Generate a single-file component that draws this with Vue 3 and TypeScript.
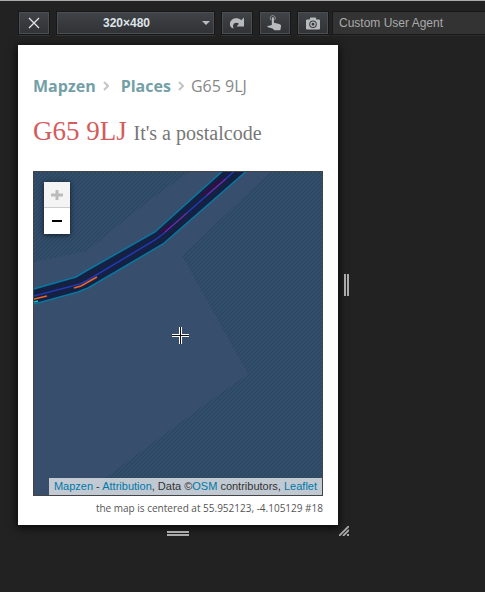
<script setup lang="ts">
import { computed, ref } from 'vue'

interface Preset {
  width: number
  height: number
}

const presets: Preset[] = [
  { width: 320, height: 480 },
  { width: 360, height: 640 },
  { width: 768, height: 1024 },
]
const selected = ref(0)
const rotated = ref(false)
const touch = ref(false)
const userAgent = ref('')

const deviceSize = computed(() => {
  const { width, height } = presets[selected.value]
  return rotated.value
    ? { width: `${height}px`, minHeight: `${width}px` }
    : { width: `${width}px`, minHeight: `${height}px` }
})
</script>

<template>
  <div class="responsive-mode">
    <header class="toolbar">
      <button class="tool" type="button" aria-label="Close">
        <svg width="12" height="12" viewBox="0 0 12 12">
          <path d="M1 1 11 11M11 1 1 11" stroke="#e2e4e6" stroke-width="1.3" fill="none" />
        </svg>
      </button>
      <div class="preset">
        <select v-model="selected" aria-label="Screen size">
          <option v-for="(p, i) in presets" :key="i" :value="i">{{ p.width }}×{{ p.height }}</option>
        </select>
        <svg class="arrow" width="8" height="4" viewBox="0 0 8 4">
          <path d="M0 0H8L4 4Z" fill="#b9bcbf" />
        </svg>
      </div>
      <button class="tool" type="button" aria-label="Rotate" @click="rotated = !rotated">
        <svg width="16" height="14" viewBox="0 0 16 14">
          <path d="M15 1.500V10.500H7.500L10 7.800C8 6 4.800 6.600 4.100 9.200 3.900 10.400 4.200 11.600 4.800 12.600 2.200 12.100.8 10.100.9 7.900 1.300 2.300 8.300.6 12.300 4.200Z" fill="#b8bbbd" />
        </svg>
      </button>
      <button class="tool" type="button" aria-label="Touch events" @click="touch = !touch">
        <svg width="16" height="16" viewBox="0 0 16 16">
          <path d="M3.900 5.200C2.300 2.200 4.200.6 5.800.6S9.200 2.200 7.700 4.800" stroke="#999c9f" stroke-width="1" fill="none" />
          <path d="M4.800 3.200C4.800 2 6.900 2 6.900 3.200V7.700L12.200 8.900C13.700 9.300 14.300 10.200 14 11.600L13.300 15.300H7.300L4.800 12.800Z" fill="#b8bbbd" />
          <path d="M5.500 10.200 3.300 9.900V10.700H1C.3 10.900.3 12.200 1 12.300L5.500 13.500Z" fill="#b8bbbd" />
        </svg>
      </button>
      <button class="tool" type="button" aria-label="Screenshot">
        <svg width="14" height="13" viewBox="0 0 14 13">
          <path fill-rule="evenodd" d="M4.300.5H9.700L10.400 2.500H13Q14 2.500 14 3.500V11.500Q14 12.500 13 12.500H1Q0 12.500 0 11.500V3.500Q0 2.500 1 2.500H3.600ZM7 3.500A3.800 3.800 0 1 0 7 11.100 3.800 3.800 0 1 0 7 3.500Z" fill="#b8bbbd" />
          <circle cx="7" cy="7.300" r="2.100" fill="none" stroke="#b8bbbd" stroke-width="1.300" />
        </svg>
      </button>
      <input v-model="userAgent" class="agent" type="text" aria-label="Custom User Agent" placeholder="Custom User Agent" />
    </header>

    <div class="stage">
      <main class="device" :style="deviceSize">
        <nav class="crumbs" aria-label="Breadcrumb">
          <a href="#mapzen">Mapzen</a>
          <svg width="6" height="10" viewBox="0 0 6 10"><path d="M1 1 5 5 1 9" /></svg>
          <a class="places" href="#places">Places</a>
          <svg width="6" height="10" viewBox="0 0 6 10"><path d="M1 1 5 5 1 9" /></svg>
          <span>G65 9LJ</span>
        </nav>
        <h1>G65 9LJ <small>It's a postalcode</small></h1>

        <section class="map" aria-label="Map">
          <svg class="tiles" viewBox="34 172 288 323" preserveAspectRatio="xMidYMid slice">
            <defs>
              <pattern id="hatch" width="4" height="4" patternUnits="userSpaceOnUse">
                <rect width="4" height="4" fill="#334f6e" />
                <path d="M-1 1 1-1M-1 5 5-1M3 5 5 3" stroke="#29445b" stroke-width="1.100" />
              </pattern>
            </defs>
            <rect x="34" y="172" width="288" height="323" fill="#384e6d" />
            <path d="M34 172H189L150 200 87 251 34 262Z" fill="url(#hatch)" />
            <path d="M270 172 182 256 248 374 200 408 105 478 80 495H322V172Z" fill="url(#hatch)" />
            <path d="M30 290 76 277 86 271 155 232 226 168H250L163 244 88 288 78 292 30 305Z" fill="#142142" stroke="#0878a2" stroke-width="1.500" />
            <path d="M160 233 170 225M202 195 222 179" stroke="#3d0a45" stroke-width="2" fill="none" />
            <path d="M30 297 80 284 88 280 155 240 163 234 238 168" stroke="#2339b4" stroke-width="1.500" fill="none" />
            <path d="M165 232 187 213M207 195 226 179" stroke="#9b1f9d" stroke-width="1" fill="none" />
            <path d="M74 288 81 286 97 277M34 299 47 296" stroke="#f06423" stroke-width="1.500" fill="none" />
            <path d="M34 302 38 301" stroke="#18c7bd" stroke-width="1.500" />
          </svg>
          <div class="zoom">
            <button type="button" aria-label="Zoom in" disabled>
              <svg width="12" height="12" viewBox="0 0 12 12"><path d="M0 6H12M6 1V11" /></svg>
            </button>
            <button type="button" aria-label="Zoom out">
              <svg width="12" height="12" viewBox="0 0 12 12"><path d="M1 6H11" /></svg>
            </button>
          </div>
          <svg class="cross" width="17" height="17" viewBox="0 0 17 17">
            <path d="M8.500 0V17M0 8.500H17" stroke="#fff" stroke-width="3" />
            <path d="M8.500 0V17M0 8.500H17" stroke="#111" stroke-width="1" />
          </svg>
          <div class="attribution">
            <a href="#mapzen">Mapzen</a> - <a href="#attribution">Attribution</a>, Data ©<a href="#osm">OSM</a> contributors, <a href="#leaflet">Leaflet</a>
          </div>
        </section>
        <p class="center">the map is centered at 55.952123, -4.105129 #18</p>
      </main>
      <div class="grip side"></div>
      <div class="grip bottom"></div>
      <svg class="corner" width="10" height="10" viewBox="0 0 10 10">
        <path d="M0 10 10 0M4 10 10 4" stroke="#aaa" stroke-width="1.800" />
        <rect x="8" y="8" width="2" height="2" fill="#aaa" />
      </svg>
    </div>
  </div>
</template>

<style>
body {
  background: #222;
}
</style>

<style scoped>
* {
  box-sizing: border-box;
}
.responsive-mode {
  min-height: 100vh;
  border-top: 1px solid #a9adad;
  background: #222;
  font-family: "Liberation Sans", Arial, sans-serif;
  overflow: hidden;
}
.toolbar {
  display: flex;
  gap: 6px;
  padding: 10px 0 10px 18px;
}
.tool,
.preset select {
  height: 24px;
  border: 1px solid #161718;
  border-radius: 0;
  background: linear-gradient(#404347, #303235);
  box-shadow: inset 0 0 0 1px #4b4f52, 0 1px 0 #333;
}
.tool {
  display: flex;
  flex: none;
  align-items: center;
  justify-content: center;
  width: 32px;
  padding: 0;
}
.preset {
  position: relative;
  flex: 0 1 159px;
}
.preset select {
  width: 100%;
  padding: 0 18px 0 0;
  appearance: none;
  color: #dfe3e9;
  font: bold 12px "Liberation Sans", Arial, sans-serif;
  text-align-last: center;
}
.arrow {
  position: absolute;
  top: 10px;
  right: 5px;
  pointer-events: none;
}
.agent {
  flex: 1;
  min-width: 0;
  height: 24px;
  margin-left: -3px;
  padding: 0 6px;
  border: 1px solid #181818;
  border-right: 0;
  background: #333;
  box-shadow: 0 1px 0 #2b2b2b;
  color: #ddd;
  font: 12px "Liberation Sans", Arial, sans-serif;
}
.agent::placeholder {
  color: #aaa;
  opacity: 1;
}
.stage {
  display: grid;
  grid-template-columns: minmax(0, max-content) 16px;
  padding: 0 0 40px 18px;
}
.device {
  display: flex;
  flex-direction: column;
  max-width: 100%;
  padding: 29px 15px 9px;
  background: #fff;
  box-shadow: 0 2px 8px 1px rgba(0, 0, 0, 0.75);
}
.crumbs {
  display: flex;
  align-items: center;
  gap: 7px;
  color: #888;
  font: 16px/24px "Open Sans", sans-serif;
}
.crumbs a {
  color: #73a0a6;
  font-weight: 700;
  text-decoration: none;
}
.crumbs .places {
  margin-left: 5px;
}
.crumbs path {
  fill: none;
  stroke: #c4c4c4;
  stroke-width: 2;
}
h1 {
  margin: 13px 0 20px;
  color: #d45c5c;
  font: 27px/40px "Liberation Serif", serif;
  white-space: nowrap;
}
h1 small {
  color: #777;
  font-size: 20px;
  line-height: 24px;
}
.map {
  position: relative;
  flex: 1;
  min-height: 240px;
  border: 1px solid #444;
  background: #384e6d;
}
.tiles {
  position: absolute;
  inset: 0;
  width: 100%;
  height: 100%;
}
.zoom {
  position: absolute;
  top: 10px;
  left: 10px;
  box-shadow: 0 1px 5px rgba(0, 0, 0, 0.65);
}
.zoom button {
  display: flex;
  align-items: center;
  justify-content: center;
  width: 26px;
  height: 26px;
  padding: 0;
  border: 0;
  background: #fff;
}
.zoom button:disabled {
  border-bottom: 1px solid #ccc;
  background: #f4f4f4;
}
.zoom path {
  stroke: #000;
  stroke-width: 2;
}
.zoom button:disabled path {
  stroke: #bbb;
  stroke-width: 3;
}
.cross {
  position: absolute;
  top: 50%;
  left: 50%;
  margin: -7px 0 0 -6px;
}
.attribution {
  position: absolute;
  right: 0;
  bottom: 0;
  padding: 0 5px;
  background: rgba(255, 255, 255, 0.7);
  color: #333;
  font-size: 11px;
  line-height: 17px;
  white-space: nowrap;
}
.attribution a {
  color: #0078a8;
  text-decoration: none;
}
.center {
  margin: 4px 0 0;
  color: #555;
  font: 10px/16px "Open Sans", sans-serif;
  text-align: right;
}
.grip {
  place-self: center;
  border: 0 solid #aaa;
}
.grip.side {
  width: 5px;
  height: 22px;
  border-width: 0 2px;
}
.grip.bottom {
  width: 22px;
  height: 5px;
  margin-top: 6px;
  border-width: 2px 0;
}
.corner {
  margin: 1px 0 0 1px;
}
</style>
